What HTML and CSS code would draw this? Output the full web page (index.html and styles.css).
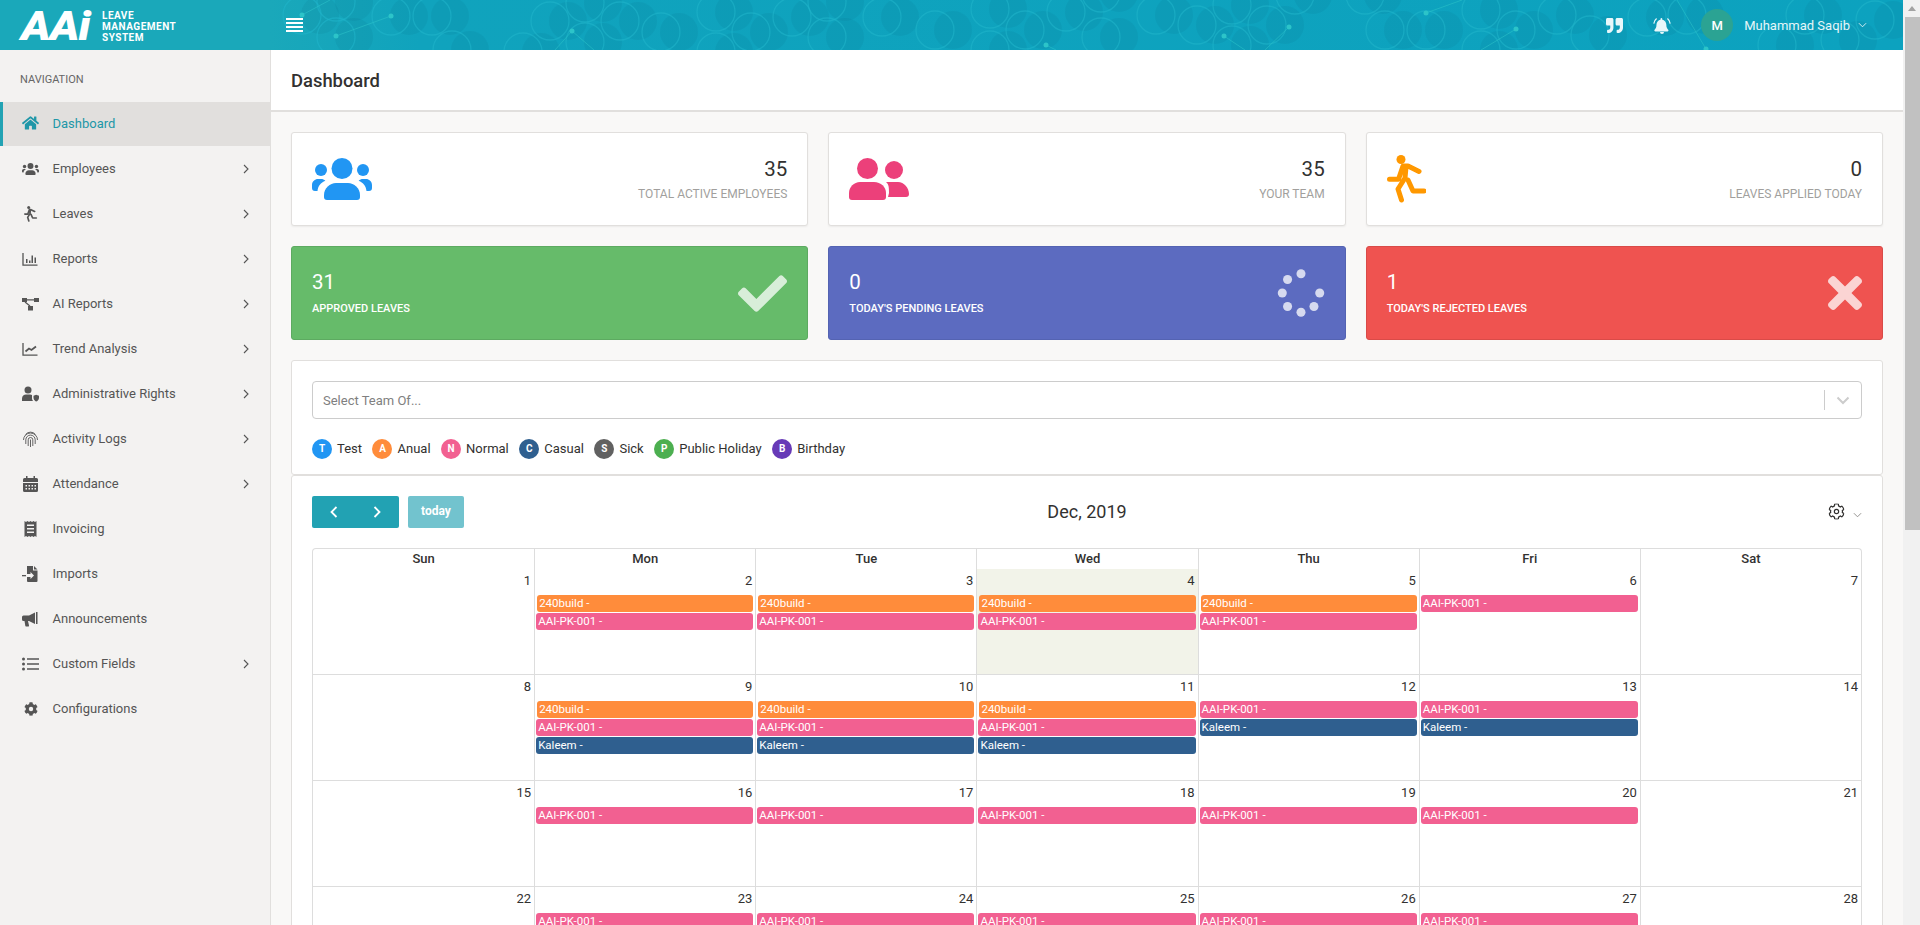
FILE: index.html
```html
<!DOCTYPE html>
<html lang="en">
<head>
    <meta charset="UTF-8">
    <meta name="viewport" content="width=device-width, initial-scale=1.0">
    <title>Leave Management System</title>
    <link rel="stylesheet" href="styles.css">
</head>
<body>
    <svg class="icon-defs" aria-hidden="true">
        <defs>
            <symbol id="i-users" viewBox="0 0 60 42">
                <circle cx="30" cy="10.5" r="10.5"/>
                <circle cx="9" cy="12" r="6"/>
                <circle cx="51" cy="12" r="6"/>
                <path d="M15 42a3 3 0 0 1-3-3v-2c0-7 6-12 12-12h12c6 0 12 5 12 12v2a3 3 0 0 1-3 3z"/>
                <path d="M0 30v-3c0-3.5 3-6 6-6h3c1.7 0 3.2.6 4.4 1.7C8.7 24.5 6 28 5.5 33H3a3 3 0 0 1-3-3z"/>
                <path d="M60 30v-3c0-3.5-3-6-6-6h-3c-1.7 0-3.2.6-4.4 1.700C51.3 24.5 54 28 54.5 33H57a3 3 0 0 0 3-3z"/>
            </symbol>
            <symbol id="i-run" viewBox="0 0 39 48">
                <circle cx="14" cy="4.5" r="4.5"/>
                <path d="M32 16.5L21 11l-5 0-4.500 13.300H2.500M19 12l-1 11-7 11 3.500 11M21 25l5 11h11" fill="none" stroke="currentColor" stroke-width="5" stroke-linecap="round" stroke-linejoin="round"/>
            </symbol>
            <symbol id="i-cog" viewBox="0 0 512 512">
                <path d="M487.4 315.7l-42.6-24.6c4.3-23.2 4.3-47 0-70.2l42.6-24.6c4.9-2.8 7.1-8.6 5.5-14-11.1-35.6-30-67.8-54.7-94.6-3.8-4.1-10-5.1-14.8-2.3L380.8 110c-17.9-15.4-38.5-27.3-60.8-35.1V25.8c0-5.6-3.9-10.5-9.4-11.7-36.7-8.2-74.3-7.8-109.2 0-5.5 1.2-9.4 6.1-9.4 11.7V75c-22.2 7.9-42.8 19.8-60.8 35.1L88.7 85.5c-4.9-2.8-11-1.9-14.8 2.3-24.7 26.7-43.6 58.9-54.7 94.6-1.7 5.4.6 11.2 5.5 14L67.3 221c-4.3 23.2-4.3 47 0 70.2l-42.6 24.6c-4.9 2.8-7.1 8.6-5.5 14 11.1 35.6 30 67.8 54.7 94.6 3.8 4.1 10 5.1 14.8 2.3l42.6-24.6c17.9 15.4 38.5 27.3 60.8 35.1v49.2c0 5.6 3.9 10.5 9.4 11.7 36.7 8.2 74.3 7.8 109.2 0 5.5-1.2 9.4-6.1 9.4-11.7v-49.2c22.2-7.9 42.8-19.8 60.8-35.1l42.6 24.6c4.9 2.8 11 1.9 14.8-2.3 24.7-26.7 43.6-58.9 54.7-94.6 1.5-5.5-.7-11.3-5.6-14.1z"/>
            </symbol>
            <symbol id="i-chevron" viewBox="0 0 8 12">
                <path d="M2 2l4 4-4 4" fill="none" stroke="currentColor" stroke-width="1.1"/>
            </symbol>
            <g id="ring">
                <circle cx="18" r="19" class="blob"/>
                <circle r="19" class="loop"/>
            </g>
        </defs>
    </svg>

    <div class="window">
        <header class="topbar">
            <svg class="topbar-pattern" viewBox="0 0 1903 50" aria-hidden="true">
                <use href="#ring" x="302" y="15"/><use href="#ring" x="336" y="2"/><use href="#ring" x="336" y="37"/>
                <use href="#ring" x="391" y="16"/><use href="#ring" x="432" y="16"/><use href="#ring" x="452" y="50"/>
                <use href="#ring" x="523" y="52"/><use href="#ring" x="550" y="21"/><use href="#ring" x="585" y="3"/>
                <use href="#ring" x="585" y="42"/><use href="#ring" x="620" y="21"/><use href="#ring" x="661" y="32"/>
                <use href="#ring" x="716" y="12"/><use href="#ring" x="716" y="52"/><use href="#ring" x="751" y="32"/>
                <use href="#ring" x="792" y="17"/><use href="#ring" x="827" y="2"/><use href="#ring" x="827" y="37"/>
                <use href="#ring" x="882" y="17"/><use href="#ring" x="935" y="30"/><use href="#ring" x="990" y="9"/>
                <use href="#ring" x="990" y="50"/><use href="#ring" x="1025" y="30"/><use href="#ring" x="1066" y="12"/>
                <use href="#ring" x="1101" y="-7"/><use href="#ring" x="1101" y="37"/><use href="#ring" x="1156" y="15"/>
                <use href="#ring" x="1197" y="25"/><use href="#ring" x="1232" y="5"/><use href="#ring" x="1232" y="45"/>
                <use href="#ring" x="1267" y="25"/><use href="#ring" x="1295" y="-5"/><use href="#ring" x="1365" y="-5"/>
                <use href="#ring" x="1385" y="30"/><use href="#ring" x="1426" y="30"/><use href="#ring" x="1481" y="10"/>
                <use href="#ring" x="1481" y="50"/><use href="#ring" x="1516" y="30"/><use href="#ring" x="1557" y="15"/>
                <use href="#ring" x="1590" y="35"/><use href="#ring" x="1647" y="17"/><use href="#ring" x="1687" y="15"/>
                <use href="#ring" x="1777" y="45"/><use href="#ring" x="1805" y="15"/><use href="#ring" x="1840" y="40"/>
                <use href="#ring" x="1875" y="20"/>
                <path class="link" d="M302 15L330 0M336 36L391 16M572 31L555 50M572 31L594 50M1046 45L1056 50M1224 36L1245 50M1289 27L1265 50M1426 13L1462 0M1516 29L1481 50M1677 0L1706 49"/>
                <g class="node">
                    <circle cx="302" cy="15" r="2.5"/><circle cx="336" cy="36" r="2.5"/><circle cx="391" cy="16" r="2.5"/>
                    <circle cx="572" cy="31" r="2.5"/><circle cx="1046" cy="45" r="2.5"/><circle cx="1224" cy="36" r="2.5"/>
                    <circle cx="1289" cy="27" r="2.5"/><circle cx="1426" cy="13" r="2.5"/><circle cx="1516" cy="29" r="2.5"/>
                    <circle cx="1706" cy="49" r="2.5"/>
                </g>
            </svg>

            <div class="brand">
                <span class="brand-mark">AAi</span>
                <span class="brand-name">LEAVE<br>MANAGEMENT<br>SYSTEM</span>
            </div>
            <svg class="burger" viewBox="0 0 17 14">
                <path d="M0 0h17v2H0zM0 4h17v2H0zM0 8h17v2H0zM0 12h17v2H0z"/>
            </svg>

            <div class="topbar-right">
                <svg class="quote-icon" viewBox="0 0 512 512">
                    <path d="M464 32H336c-26.5 0-48 21.5-48 48v128c0 26.5 21.5 48 48 48h80v64c0 35.3-28.7 64-64 64h-8c-13.3 0-24 10.7-24 24v48c0 13.3 10.7 24 24 24h8c88.4 0 160-71.6 160-160V80c0-26.5-21.5-48-48-48zm-288 0H48C21.5 32 0 53.5 0 80v128c0 26.5 21.5 48 48 48h80v64c0 35.3-28.7 64-64 64h-8c-13.3 0-24 10.7-24 24v48c0 13.3 10.7 24 24 24h8c88.4 0 160-71.6 160-160V80c0-26.5-21.5-48-48-48z"/>
                </svg>
                <svg class="bell-icon" viewBox="0 0 18 17">
                    <path d="M9 17a2 2 0 0 0 2-2H7a2 2 0 0 0 2 2zm6.2-4.2c-.7-.7-1.9-1.8-1.9-5.2 0-2.5-1.7-4.4-4-4.9V2a.9.9 0 0 0-1.8 0v.7c-2.3.5-4 2.4-4 4.9 0 3.4-1.2 4.5-1.9 5.2-.6.7-.2 1.700.8 1.700h12c1 0 1.400-1 .8-1.700z"/>
                    <path d="M3.6 1.5C2 2.8 1 4.6.8 6.6M14.4 1.5c1.6 1.3 2.6 3.1 2.8 5.1" class="bell-ring"/>
                </svg>
                <span class="avatar">M</span>
                <span class="user-name">Muhammad Saqib</span>
                <svg class="user-caret" viewBox="0 0 10 6"><path d="M1 1l4 4 4-4"/></svg>
            </div>
        </header>

        <div class="layout">
            <aside class="sidebar">
                <div class="nav-title">NAVIGATION</div>
                <nav>
                    <a class="nav-item active">
                        <svg class="nav-icon" viewBox="0 0 576 512"><path d="M280.37 148.26L96 300.11V464a16 16 0 0 0 16 16l112.06-.29a16 16 0 0 0 15.92-16V368a16 16 0 0 1 16-16h64a16 16 0 0 1 16 16v95.64a16 16 0 0 0 16 16.05L464 480a16 16 0 0 0 16-16V300L295.67 148.26a12.19 12.19 0 0 0-15.3 0zM571.6 251.47L488 182.56V44.05a12 12 0 0 0-12-12h-56a12 12 0 0 0-12 12v72.61L318.47 43a48 48 0 0 0-61 0L4.34 251.47a12 12 0 0 0-1.6 16.9l25.5 31A12 12 0 0 0 45.15 301l235.22-193.74a12.19 12.19 0 0 1 15.3 0L530.9 301a12 12 0 0 0 16.9-1.6l25.5-31a12 12 0 0 0-1.7-16.93z"/></svg>
                        <span>Dashboard</span>
                    </a>
                    <a class="nav-item">
                        <svg class="nav-icon"><use href="#i-users"/></svg>
                        <span>Employees</span>
                        <svg class="nav-arrow"><use href="#i-chevron"/></svg>
                    </a>
                    <a class="nav-item">
                        <svg class="nav-icon nav-icon-run"><use href="#i-run"/></svg>
                        <span>Leaves</span>
                        <svg class="nav-arrow"><use href="#i-chevron"/></svg>
                    </a>
                    <a class="nav-item">
                        <svg class="nav-icon" viewBox="0 0 17 16"><path d="M1 2v12.200h14.500" class="line"/><path d="M4 8h1.500v4H4zM7 9.500h1.500V12H7zM9.500 4.500H11V12H9.500zM12.500 6.500H14V12h-1.500z"/></svg>
                        <span>Reports</span>
                        <svg class="nav-arrow"><use href="#i-chevron"/></svg>
                    </a>
                    <a class="nav-item">
                        <svg class="nav-icon" viewBox="0 0 17 16"><path d="M0 2h5v4H0zM12 2h5v4h-5zM6 10h5v4.500H6z"/><path d="M5 3.800h7M3 6l5 4" class="line"/></svg>
                        <span>AI Reports</span>
                        <svg class="nav-arrow"><use href="#i-chevron"/></svg>
                    </a>
                    <a class="nav-item">
                        <svg class="nav-icon" viewBox="0 0 17 16"><path d="M1 2v12.200h14.500" class="line"/><path d="M3.500 10.500l3.500-3 2.500 1.500 4.500-3.500" class="line line-bold"/></svg>
                        <span>Trend Analysis</span>
                        <svg class="nav-arrow"><use href="#i-chevron"/></svg>
                    </a>
                    <a class="nav-item">
                        <svg class="nav-icon" viewBox="0 0 17 16"><circle cx="6" cy="4" r="3.5"/><path d="M0 15v-2.500C0 10 2 8.500 4 8.500h4c.8 0 1.500.2 2 .5v3c0 1.200.4 2.300 1.200 3z"/><path d="M11.500 9.800l2.700-1 2.800 1v2c0 1.800-1.200 3.200-2.800 3.700-1.500-.5-2.700-1.900-2.700-3.700z"/></svg>
                        <span>Administrative Rights</span>
                        <svg class="nav-arrow"><use href="#i-chevron"/></svg>
                    </a>
                    <a class="nav-item">
                        <svg class="nav-icon" viewBox="0 0 17 16"><path d="M3.500 3.500A6.500 6.500 0 0 1 13.500 3.500M1.500 9A7 7 0 0 1 15.500 9M3.800 13V8.800a4.700 4.700 0 0 1 9.400 0V13M6.200 15V8.800a2.300 2.300 0 0 1 4.600 0V15M8.500 8.500V16" class="line line-thin"/></svg>
                        <span>Activity Logs</span>
                        <svg class="nav-arrow"><use href="#i-chevron"/></svg>
                    </a>
                    <a class="nav-item">
                        <svg class="nav-icon" viewBox="0 0 17 16"><path fill-rule="evenodd" d="M4 0h1.500v2h6V0H13v2h1.500A1.500 1.500 0 0 1 16 3.500V6H1V3.500A1.500 1.500 0 0 1 2.500 2H4zM1 7h15v7.500a1.500 1.500 0 0 1-1.500 1.500h-12A1.500 1.500 0 0 1 1 14.500zM3.500 9v1.500H5V9zm3 0v1.500H8V9zm3 0v1.500H11V9zm3 0v1.500H14V9zm-9 3v1.500H5V12zm3 0v1.500H8V12zm3 0v1.500H11V12zm3 0v1.500H14V12z"/></svg>
                        <span>Attendance</span>
                        <svg class="nav-arrow"><use href="#i-chevron"/></svg>
                    </a>
                    <a class="nav-item">
                        <svg class="nav-icon" viewBox="0 0 17 16"><path fill-rule="evenodd" d="M2.500 0l1.500 1 1.500-1 1.500 1 1.500-1 1.500 1 1.500-1 1.500 1 1.500-1v16l-1.500-1-1.500 1-1.500-1-1.500 1-1.500-1-1.500 1-1.500-1-1.500 1zM5 3.500V5h7V3.500zM5 7v1.500h7V7zm0 3.500V12h7v-1.500z"/></svg>
                        <span>Invoicing</span>
                    </a>
                    <a class="nav-item">
                        <svg class="nav-icon" viewBox="0 0 17 16"><path fill-rule="evenodd" d="M5 0h6v4.500h4.500V15a1 1 0 0 1-1 1H6a1 1 0 0 1-1-1v-4h3.500v2L12 9.500 8.500 6v2H5zM12 0l3.500 3.500H12z"/><path d="M0 9h4v1.300H0z"/></svg>
                        <span>Imports</span>
                    </a>
                    <a class="nav-item">
                        <svg class="nav-icon" viewBox="0 0 17 16"><path d="M0 6a1.500 1.500 0 0 1 1.500-1.500H7L13 1.500v11.500L7 10H6l1 4.500a.7.700 0 0 1-.7.900H4a.7.700 0 0 1-.7-.6L2.500 10h-1A1.500 1.500 0 0 1 0 8.500z"/><path d="M14 1h1.500v12H14z"/></svg>
                        <span>Announcements</span>
                    </a>
                    <a class="nav-item">
                        <svg class="nav-icon" viewBox="0 0 17 16"><circle cx="1.5" cy="3" r="1.5"/><circle cx="1.5" cy="8" r="1.5"/><circle cx="1.5" cy="13" r="1.5"/><path d="M5 2.200h12v1.500H5zM5 7.200h12v1.500H5zM5 12.200h12v1.500H5z"/></svg>
                        <span>Custom Fields</span>
                        <svg class="nav-arrow"><use href="#i-chevron"/></svg>
                    </a>
                    <a class="nav-item">
                        <svg class="nav-icon nav-icon-cog" viewBox="0 0 512 512"><use href="#i-cog"/><circle cx="256" cy="256" r="80" class="cog-hole"/></svg>
                        <span>Configurations</span>
                    </a>
                </nav>
            </aside>

            <main class="main">
                <div class="page-title"><h1>Dashboard</h1></div>

                <div class="content">
                    <section class="stats">
                        <div class="stat-card">
                            <svg class="stat-icon blue"><use href="#i-users"/></svg>
                            <div class="stat-text">
                                <div class="stat-num">35</div>
                                <div class="stat-label">TOTAL ACTIVE EMPLOYEES</div>
                            </div>
                        </div>
                        <div class="stat-card">
                            <svg class="stat-icon pink" viewBox="0 0 60 42">
                                <circle cx="18.5" cy="10.5" r="10.5"/>
                                <circle cx="45" cy="12" r="9"/>
                                <path d="M3 42a3 3 0 0 1-3-3v-4c0-6 5-11 11-11h14c7 0 12 5 12 11v4a3 3 0 0 1-3 3z"/>
                                <path d="M39 39h18a3 3 0 0 0 3-3c0-6-5-12-11-12H37c3 2.500 3 6 3 11z"/>
                            </svg>
                            <div class="stat-text">
                                <div class="stat-num">35</div>
                                <div class="stat-label">YOUR TEAM</div>
                            </div>
                        </div>
                        <div class="stat-card">
                            <svg class="stat-icon orange"><use href="#i-run"/></svg>
                            <div class="stat-text">
                                <div class="stat-num">0</div>
                                <div class="stat-label">LEAVES APPLIED TODAY</div>
                            </div>
                        </div>

                        <div class="stat-card solid green">
                            <div class="solid-text">
                                <div class="stat-num">31</div>
                                <div class="stat-label">APPROVED LEAVES</div>
                            </div>
                            <svg class="solid-icon check-icon" viewBox="0 0 512 512"><path d="M173.898 439.404l-166.4-166.4c-9.997-9.997-9.997-26.206 0-36.204l36.203-36.204c9.997-9.998 26.207-9.998 36.204 0L192 312.69 432.095 72.596c9.997-9.997 26.207-9.997 36.204 0l36.203 36.204c9.997 9.997 9.997 26.206 0 36.204l-294.4 294.401c-9.998 9.997-26.207 9.997-36.204-.001z"/></svg>
                        </div>
                        <div class="stat-card solid indigo">
                            <div class="solid-text">
                                <div class="stat-num">0</div>
                                <div class="stat-label">TODAY'S PENDING LEAVES</div>
                            </div>
                            <svg class="solid-icon spinner-icon" viewBox="0 0 50 52">
                                <circle cx="25" cy="6" r="4.7"/><circle cx="11" cy="12" r="4.7"/><circle cx="5.5" cy="26" r="4.7"/>
                                <circle cx="11" cy="40" r="4.7"/><circle cx="25" cy="46" r="4.7"/><circle cx="38.5" cy="40" r="4.7"/>
                                <circle cx="44.5" cy="26" r="4.7"/>
                            </svg>
                        </div>
                        <div class="stat-card solid red">
                            <div class="solid-text">
                                <div class="stat-num">1</div>
                                <div class="stat-label">TODAY'S REJECTED LEAVES</div>
                            </div>
                            <svg class="solid-icon times-icon" viewBox="0 0 352 352"><path d="M242.72 176l100.07-100.07c12.28-12.28 12.28-32.19 0-44.48l-22.24-22.24c-12.28-12.28-32.19-12.28-44.48 0L176 109.28 75.93 9.21c-12.28-12.28-32.19-12.28-44.48 0L9.21 31.45c-12.28 12.28-12.28 32.19 0 44.48L109.28 176 9.21 276.07c-12.28 12.28-12.28 32.19 0 44.48l22.24 22.24c12.28 12.28 32.2 12.28 44.48 0L176 242.72l100.07 100.07c12.28 12.28 32.2 12.28 44.48 0l22.24-22.24c12.28-12.28 12.28-32.19 0-44.48L242.72 176z"/></svg>
                        </div>
                    </section>

                    <section class="filter-card">
                        <div class="select-box">
                            <span class="select-placeholder">Select Team Of...</span>
                            <span class="select-sep"></span>
                            <svg class="select-caret" viewBox="0 0 14 9"><path d="M1.5 1.5L7 7l5.5-5.5"/></svg>
                        </div>
                        <div class="legend">
                            <span class="legend-item"><i class="dot c-test">T</i>Test</span>
                            <span class="legend-item"><i class="dot c-anual">A</i>Anual</span>
                            <span class="legend-item"><i class="dot c-normal">N</i>Normal</span>
                            <span class="legend-item"><i class="dot c-casual">C</i>Casual</span>
                            <span class="legend-item"><i class="dot c-sick">S</i>Sick</span>
                            <span class="legend-item"><i class="dot c-public">P</i>Public Holiday</span>
                            <span class="legend-item"><i class="dot c-birthday">B</i>Birthday</span>
                        </div>
                    </section>

                    <section class="calendar-card">
                        <div class="cal-toolbar">
                            <div class="cal-buttons">
                                <div class="btn-group">
                                    <svg viewBox="0 0 8 12"><path d="M6.5 1L1.500 6l5 5"/></svg>
                                    <svg viewBox="0 0 8 12"><path d="M1.5 1l5 5-5 5"/></svg>
                                </div>
                                <span class="btn-today">today</span>
                            </div>
                            <h2 class="cal-title">Dec, 2019</h2>
                            <div class="cal-tools">
                                <svg class="gear-icon" viewBox="-20 -20 552 552"><use href="#i-cog" width="512" height="512"/><circle cx="256" cy="256" r="70"/></svg>
                                <svg class="gear-caret" viewBox="0 0 10 6"><path d="M1 1l4 4 4-4"/></svg>
                            </div>
                        </div>

                        <div class="cal-wrap">
                            <table class="cal">
                                <thead>
                                    <tr><th>Sun</th><th>Mon</th><th>Tue</th><th>Wed</th><th>Thu</th><th>Fri</th><th>Sat</th></tr>
                                </thead>
                                <tbody>
                                    <tr>
                                        <td><div class="day">1</div></td>
                                        <td><div class="day">2</div><div class="ev ev-anual">240build -</div><div class="ev ev-normal">AAI-PK-001 -</div></td>
                                        <td><div class="day">3</div><div class="ev ev-anual">240build -</div><div class="ev ev-normal">AAI-PK-001 -</div></td>
                                        <td class="today"><div class="day">4</div><div class="ev ev-anual">240build -</div><div class="ev ev-normal">AAI-PK-001 -</div></td>
                                        <td><div class="day">5</div><div class="ev ev-anual">240build -</div><div class="ev ev-normal">AAI-PK-001 -</div></td>
                                        <td><div class="day">6</div><div class="ev ev-normal">AAI-PK-001 -</div></td>
                                        <td><div class="day">7</div></td>
                                    </tr>
                                    <tr>
                                        <td><div class="day">8</div></td>
                                        <td><div class="day">9</div><div class="ev ev-anual">240build -</div><div class="ev ev-normal">AAI-PK-001 -</div><div class="ev ev-casual">Kaleem -</div></td>
                                        <td><div class="day">10</div><div class="ev ev-anual">240build -</div><div class="ev ev-normal">AAI-PK-001 -</div><div class="ev ev-casual">Kaleem -</div></td>
                                        <td><div class="day">11</div><div class="ev ev-anual">240build -</div><div class="ev ev-normal">AAI-PK-001 -</div><div class="ev ev-casual">Kaleem -</div></td>
                                        <td><div class="day">12</div><div class="ev ev-normal">AAI-PK-001 -</div><div class="ev ev-casual">Kaleem -</div></td>
                                        <td><div class="day">13</div><div class="ev ev-normal">AAI-PK-001 -</div><div class="ev ev-casual">Kaleem -</div></td>
                                        <td><div class="day">14</div></td>
                                    </tr>
                                    <tr>
                                        <td><div class="day">15</div></td>
                                        <td><div class="day">16</div><div class="ev ev-normal">AAI-PK-001 -</div></td>
                                        <td><div class="day">17</div><div class="ev ev-normal">AAI-PK-001 -</div></td>
                                        <td><div class="day">18</div><div class="ev ev-normal">AAI-PK-001 -</div></td>
                                        <td><div class="day">19</div><div class="ev ev-normal">AAI-PK-001 -</div></td>
                                        <td><div class="day">20</div><div class="ev ev-normal">AAI-PK-001 -</div></td>
                                        <td><div class="day">21</div></td>
                                    </tr>
                                    <tr>
                                        <td><div class="day">22</div></td>
                                        <td><div class="day">23</div><div class="ev ev-normal">AAI-PK-001 -</div></td>
                                        <td><div class="day">24</div><div class="ev ev-normal">AAI-PK-001 -</div></td>
                                        <td><div class="day">25</div><div class="ev ev-normal">AAI-PK-001 -</div></td>
                                        <td><div class="day">26</div><div class="ev ev-normal">AAI-PK-001 -</div></td>
                                        <td><div class="day">27</div><div class="ev ev-normal">AAI-PK-001 -</div></td>
                                        <td><div class="day">28</div></td>
                                    </tr>
                                </tbody>
                            </table>
                        </div>
                    </section>
                </div>
            </main>
        </div>
    </div>

    <div class="scrollbar">
        <span class="scroll-up"></span>
        <span class="scroll-thumb"></span>
    </div>
</body>
</html>
```

FILE: styles.css
```css
:root {
    --teal: #22a2b3;
    --text: #323130;
    --muted: #a19f9d;
    --line: #e1dfdd;
    --cell-line: #dddddd;
}

html, body {
    height: 100%;
}

body {
    margin: 0;
    display: flex;
    overflow: hidden;
    font-family: 'Roboto', 'Liberation Sans', sans-serif;
    font-size: 13px;
    color: var(--text);
    background: #f9f8f7;
}

.icon-defs {
    position: absolute;
    width: 0;
    height: 0;
}

.window {
    flex: 1;
    min-width: 0;
    display: flex;
    flex-direction: column;
    height: 925px;
}

/* top bar */
.topbar {
    position: relative;
    flex: 0 0 50px;
    display: flex;
    align-items: center;
    overflow: hidden;
    color: #fff;
    background: linear-gradient(90deg, #1aa8ba 0, #1aa8ba 270px, #10a3bd 420px, #0ca2bf 100%);
}

.topbar-pattern {
    position: absolute;
    left: 0;
    top: 0;
    width: 1903px;
    height: 50px;
}

.blob {
    fill: rgba(0, 70, 100, 0.07);
}

.loop {
    fill: none;
    stroke: #1fb4c9;
    stroke-width: 1.3;
    stroke-opacity: 0.6;
}

.link {
    fill: none;
    stroke: #2cc4c9;
    stroke-width: 0.8;
    stroke-opacity: 0.7;
}

.node {
    fill: #2cc4c9;
}

.brand {
    position: relative;
    width: 286px;
    flex: none;
    display: flex;
    align-items: center;
    padding-left: 21px;
    box-sizing: border-box;
}

.brand-mark {
    width: 81px;
    flex: none;
    padding-top: 2px;
    font-size: 41px;
    line-height: 48px;
    font-weight: 900;
    font-style: italic;
    letter-spacing: -1px;
    transform: scaleX(1.1);
    transform-origin: left center;
}

.brand-name {
    padding-top: 2px;
    font-size: 10px;
    line-height: 11px;
    font-weight: 700;
    letter-spacing: 0.5px;
}

.burger {
    position: relative;
    width: 17px;
    height: 14px;
    fill: #fff;
}

.topbar-right {
    position: relative;
    margin-left: auto;
    display: flex;
    align-items: center;
    padding-right: 36px;
}

.quote-icon {
    width: 17px;
    height: 17px;
    fill: #e8f7fa;
}

.bell-icon {
    width: 18px;
    height: 17px;
    margin-left: 30px;
    fill: #e8f7fa;
}

.bell-ring {
    fill: none;
    stroke: #e8f7fa;
    stroke-width: 1.2;
}

.avatar {
    width: 32px;
    height: 32px;
    margin-left: 30px;
    border-radius: 50%;
    display: flex;
    align-items: center;
    justify-content: center;
    background: #2ba393;
    font-size: 13px;
    font-weight: 500;
}

.user-name {
    margin-left: 11px;
    font-size: 13px;
    color: #e6f6f9;
}

.user-caret {
    width: 9px;
    height: 6px;
    margin-left: 8px;
    fill: none;
    stroke: #e6f6f9;
    stroke-width: 1;
}

/* page body */
.layout {
    flex: 1;
    min-height: 0;
    display: flex;
}

.sidebar {
    flex: 0 0 271px;
    box-sizing: border-box;
    background: #f3f2f1;
    border-right: 1px solid var(--line);
}

.nav-title {
    height: 52px;
    padding: 23px 0 0 20px;
    box-sizing: border-box;
    font-size: 11px;
    line-height: 14px;
    color: #666;
}

.nav-item {
    display: flex;
    align-items: center;
    height: 45px;
    box-sizing: border-box;
    padding: 0 20px 2px 19px;
    border-left: 3px solid transparent;
    color: #555;
}

.nav-item.active {
    height: 44px;
    margin-bottom: 1px;
    background: #e1dfdd;
    border-left-color: var(--teal);
    color: #2097a8;
}

.nav-icon {
    flex: none;
    width: 17px;
    height: 16px;
    margin-right: 13.5px;
    fill: currentColor;
    color: #555;
}

.active .nav-icon {
    color: #2097a8;
}

.nav-icon-run {
    width: 15px;
    margin-left: 1px;
    margin-right: 14.5px;
}

.nav-icon-cog {
    width: 14px;
    height: 14px;
    margin-left: 1.5px;
    margin-right: 15px;
}

.cog-hole {
    fill: #f3f2f1;
}

.nav-icon .line {
    fill: none;
    stroke: currentColor;
    stroke-width: 1.3;
}

.nav-icon .line-bold {
    stroke-width: 1.8;
}

.nav-icon .line-thin {
    stroke-width: 0.9;
}

.nav-arrow {
    width: 8px;
    height: 12px;
    margin-left: auto;
    color: #555;
}

/* main column */
.main {
    flex: 1;
    min-width: 0;
    overflow: hidden;
}

.page-title {
    height: 62px;
    box-sizing: border-box;
    padding-left: 20px;
    display: flex;
    align-items: center;
    background: #fff;
    border-bottom: 2px solid var(--line);
}

.page-title h1 {
    margin: 0;
    font-size: 18.4px;
    font-weight: 500;
}

.content {
    padding: 20px;
}

.stats {
    display: grid;
    grid-template-columns: repeat(3, 1fr);
    gap: 20px;
}

.stat-card {
    height: 94px;
    box-sizing: border-box;
    display: flex;
    align-items: center;
    justify-content: space-between;
    padding: 0 20px;
    background: #fff;
    border: 1px solid var(--line);
    border-radius: 3px;
    box-shadow: 0 1px 2px rgba(0, 0, 0, 0.06);
}

.stat-icon {
    width: 60px;
    height: 42px;
}

.stat-icon.blue { fill: #2196f3; }
.stat-icon.pink { fill: #ec407a; }
.stat-icon.orange { width: 39px; height: 48px; fill: #ff9800; color: #ff9800; }

.stat-text {
    text-align: right;
}

.stat-num {
    font-size: 20.5px;
    line-height: 24px;
}

.stat-label {
    margin-top: 6px;
    font-size: 12px;
    line-height: 14px;
    color: var(--muted);
}

.stat-card.solid {
    color: #fff;
    box-shadow: none;
}

.solid .stat-label {
    margin-top: 8px;
    font-size: 11px;
    font-weight: 500;
    color: #fff;
}

.green { background: #66bb6a; border-color: #5daa61; }
.indigo { background: #5c6bc0; border-color: #5463b2; }
.red { background: #ef5350; border-color: #d94b48; }

.solid-icon {
    fill: #fff;
    opacity: 0.75;
}

.check-icon { width: 49px; height: 49px; }
.spinner-icon { width: 48px; height: 52px; }
.times-icon { width: 34px; height: 34px; }

.filter-card {
    height: 115px;
    box-sizing: border-box;
    margin-top: 20px;
    padding: 20px 20px 0;
    background: #fff;
    border: 1px solid var(--line);
    border-radius: 3px;
}

.select-box {
    height: 38px;
    box-sizing: border-box;
    display: flex;
    align-items: center;
    padding: 0 10px;
    border: 1px solid #cccccc;
    border-radius: 4px;
}

.select-placeholder {
    flex: 1;
    color: #808080;
}

.select-sep {
    width: 1px;
    height: 20px;
    background: #cccccc;
}

.select-caret {
    width: 14px;
    height: 9px;
    margin: 0 1px 0 11px;
    fill: none;
    stroke: #cccccc;
    stroke-width: 2;
}

.legend {
    display: flex;
    gap: 10.5px;
    margin-top: 20px;
}

.legend-item {
    display: flex;
    align-items: center;
    line-height: 20px;
}

.dot {
    width: 20px;
    height: 20px;
    margin-right: 5px;
    border-radius: 50%;
    display: flex;
    align-items: center;
    justify-content: center;
    color: #fff;
    font-size: 10px;
    font-weight: 700;
    font-style: normal;
}

.c-test { background: #2196f3; }
.c-anual { background: #ff8c3b; }
.c-normal { background: #f26091; }
.c-casual { background: #2f5f8f; }
.c-sick { background: #616161; }
.c-public { background: #4caf50; }
.c-birthday { background: #673ab7; }

/* calendar */
.calendar-card {
    padding: 20px;
    background: #fff;
    border: 1px solid var(--line);
    border-radius: 3px;
}

.cal-toolbar {
    display: grid;
    grid-template-columns: 1fr auto 1fr;
    align-items: center;
    height: 32px;
    margin-bottom: 20px;
}

.cal-buttons {
    display: flex;
    gap: 9px;
}

.btn-group {
    width: 87px;
    height: 32px;
    display: flex;
    align-items: center;
    justify-content: space-around;
    background: var(--teal);
    border-radius: 2px;
}

.btn-group svg {
    width: 8px;
    height: 12px;
    fill: none;
    stroke: #fff;
    stroke-width: 1.8;
}

.btn-today {
    width: 56px;
    height: 32px;
    line-height: 31px;
    text-align: center;
    background: #72c3ce;
    border-radius: 2px;
    color: #fff;
    font-size: 12px;
    font-weight: 700;
}

.cal-title {
    margin: 0 0 2px;
    font-size: 18px;
    font-weight: 400;
}

.cal-tools {
    display: flex;
    align-items: center;
    justify-content: flex-end;
    gap: 8px;
}

.gear-icon {
    width: 17px;
    height: 17px;
    fill: none;
    stroke: var(--text);
    stroke-width: 38;
    margin-bottom: 2px;
}

.gear-caret {
    width: 9px;
    height: 6px;
    margin-top: 6px;
    fill: none;
    stroke: #8a8886;
    stroke-width: 1;
}

.cal-wrap {
    border: 1px solid var(--cell-line);
    border-bottom: 0;
    border-radius: 4px 4px 0 0;
}

.cal {
    width: 100%;
    table-layout: fixed;
    border-collapse: separate;
    border-spacing: 0;
}

.cal th {
    height: 20px;
    padding: 0;
    font-size: 13px;
    line-height: 20px;
    font-weight: 500;
}

.cal th + th,
.cal td + td {
    border-left: 1px solid var(--cell-line);
}

.cal td {
    height: 106px;
    box-sizing: border-box;
    padding: 0;
    vertical-align: top;
    border-top: 1px solid var(--cell-line);
}

.cal tbody tr:first-child td {
    height: 105px;
    border-top: 0;
}

.cal td.today {
    background: #f2f3e9;
}

.day {
    height: 18px;
    margin: 3px 0 5px;
    padding-right: 3px;
    text-align: right;
    line-height: 18px;
}

.ev {
    height: 17px;
    margin: 0 2px 1px 1px;
    padding-left: 2px;
    border-radius: 3px;
    color: #fff;
    font-size: 11.5px;
    line-height: 17px;
}

.ev-anual { margin-left: 2px; background: #ff8c3b; }
.ev-normal { background: #f26091; }
.ev-casual { background: #2f5f8f; }

/* page scrollbar */
.scrollbar {
    position: relative;
    flex: 0 0 17px;
    height: 925px;
    background: #f1f1f1;
}

.scroll-up {
    display: block;
    width: 0;
    margin: 6px auto 0;
    border: 4px solid transparent;
    border-top: 0;
    border-bottom: 5px solid #a3a3a3;
}

.scroll-thumb {
    display: block;
    height: 513px;
    margin: 6px 0 0 2px;
    background: #c1c1c1;
}
```
